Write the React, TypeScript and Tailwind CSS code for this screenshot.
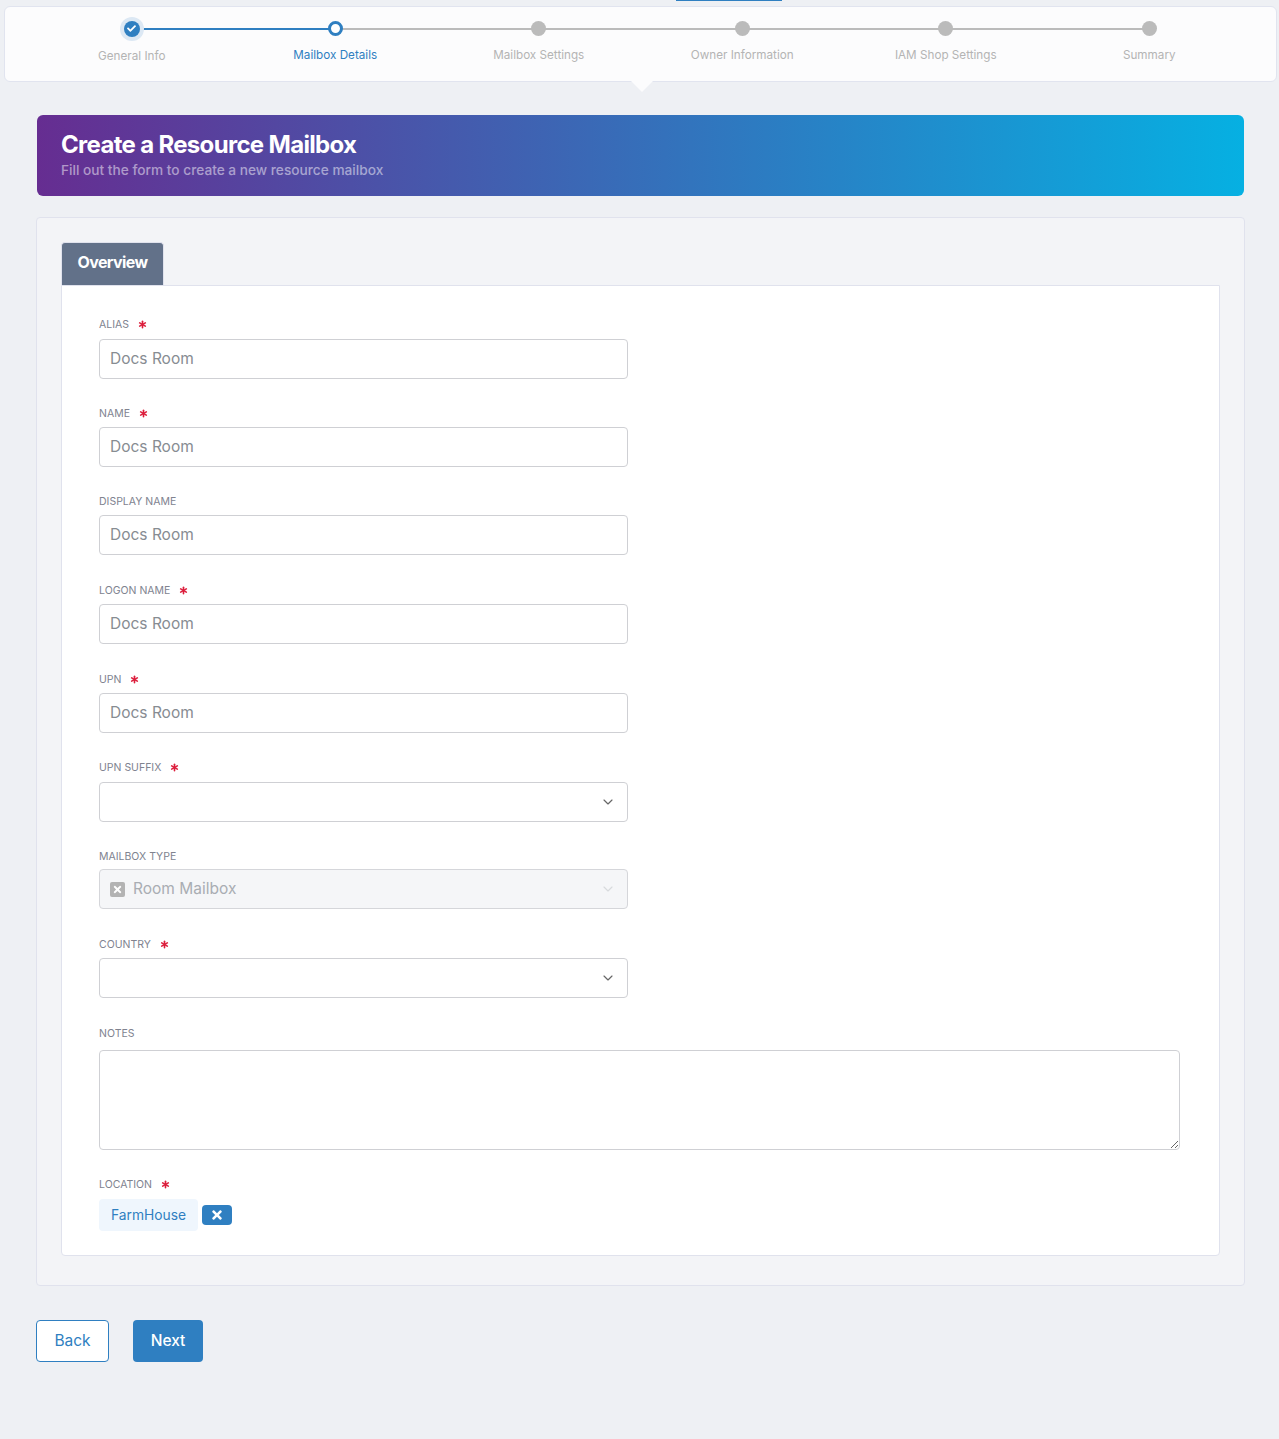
import { Asterisk, ChevronDown } from 'lucide-react'
import { FaCheck, FaTimes } from 'react-icons/fa'

const steps = ['General Info', 'Mailbox Details', 'Mailbox Settings', 'Owner Information', 'IAM Shop Settings', 'Summary']

function Stepper() {
  return (
    <div className="relative ml-1 mr-[2px] mt-[5px] h-[76px] rounded-md border border-[#e1e4ef] bg-[#fcfcfd]">
      <div className="ml-[25px] grid w-[1221px] grid-cols-6">
        {steps.map((step, index) => (
          <div key={step} className="relative flex flex-col items-center">
            {index < steps.length - 1 ? (
              <div className={`absolute left-1/2 top-[21px] h-[2px] w-full ${index === 0 ? 'bg-[#2f7fc1]' : 'bg-[#bbbbbb]'}`} />
            ) : null}
            <div className="relative flex h-[43px] w-6 items-center justify-center">
              {index === 0 ? (
                <div className="flex h-6 w-6 items-center justify-center rounded-full bg-[#dce8f4]">
                  <div className="flex h-4 w-4 items-center justify-center rounded-full bg-[#2f7fc1] text-white">
                    <FaCheck size={9} />
                  </div>
                </div>
              ) : index === 1 ? (
                <div className="h-[15px] w-[15px] rounded-full border-[3px] border-[#2f7fc1] bg-white" />
              ) : (
                <div className="h-[15px] w-[15px] rounded-full bg-[#bbbbbb]" />
              )}
            </div>
            <div className={`text-[11.7px] leading-[16px] ${index === 1 ? 'text-[#2f7fc1]' : 'text-[#b4b4b4]'} ${index === 0 ? '-mt-[2px]' : '-mt-[3px]'}`}>
              {step}
            </div>
          </div>
        ))}
      </div>
      <div className="absolute left-[626px] top-[74px] h-0 w-0 border-x-[11px] border-t-[11px] border-x-transparent border-t-[#fcfcfd]" />
    </div>
  )
}

function FieldLabel({ text, required, className = 'mb-2' }: { text: string; required?: boolean; className?: string }) {
  return (
    <div className={`flex h-[14px] items-center text-[10.5px] leading-[14px] text-[#80838f] ${className}`}>
      <span className="mt-[2px]">{text}</span>
      {required ? <Asterisk size={13} strokeWidth={3} className="ml-[7px] text-[#dc1e3c]" /> : null}
    </div>
  )
}

function TextField({ label, required, className, labelClass }: { label: string; required?: boolean; className: string; labelClass?: string }) {
  return (
    <div className={`w-[529px] ${className}`}>
      <FieldLabel text={label} required={required} className={labelClass} />
      <input
        readOnly
        value="Docs Room"
        className="h-10 w-full rounded border border-[#cfd0d4] bg-white px-[10px] pb-px text-[15.5px] text-[#878c92] outline-none"
      />
    </div>
  )
}

function SelectField({ label, required, className, labelClass }: { label: string; required?: boolean; className: string; labelClass?: string }) {
  return (
    <div className={`w-[529px] ${className}`}>
      <FieldLabel text={label} required={required} className={labelClass} />
      <div className="flex h-10 items-center justify-end rounded border border-[#cfd0d4] bg-white pr-[11px]">
        <ChevronDown size={16} strokeWidth={1.75} className="text-[#666666]" />
      </div>
    </div>
  )
}

export default function App() {
  return (
    <div className="min-h-screen bg-[#eef0f4] font-['Inter','Liberation_Sans',sans-serif]">
      <div className="ml-[676px] h-px w-[106px] bg-[#2f7fc1]" />
      <Stepper />

      <div className="ml-[37px] mt-[33px] flex h-[81px] w-[1207px] flex-col justify-center rounded-md bg-linear-to-r/srgb from-[#662d91] to-[#06b0e2] px-6 pb-[2px]">
        <h1 className="text-[24px] font-bold leading-[30px] tracking-[-0.68px] text-white">Create a Resource Mailbox</h1>
        <p className="mt-px text-[13.7px] font-medium leading-[18px] text-white/50">Fill out the form to create a new resource mailbox</p>
      </div>

      <div className="ml-9 mt-[21px] w-[1209px] rounded border border-[#e0e2ed] bg-[#f3f4f7] px-6 pb-[29px] pt-6">
        <div className="flex h-[43px] w-[103px] items-center justify-center rounded-t border border-b-0 border-[#e0e2ed] bg-[#627189] pb-[4px] text-[16px] font-bold tracking-[-0.6px] text-white">
          Overview
        </div>
        <div className="rounded-b border border-[#e0e2ed] bg-white pb-6 pl-[37px] pr-[39px] pt-[31px]">
          <TextField label="ALIAS" required className="mb-[27px]" />
          <TextField label="NAME" required labelClass="mb-[7px]" className="mb-[27px]" />
          <TextField label="DISPLAY NAME" labelClass="mb-[7px]" className="mb-[28px]" />
          <TextField label="LOGON NAME" required labelClass="mb-[7px]" className="mb-[28px]" />
          <TextField label="UPN" required labelClass="mb-[7px]" className="mb-[27px]" />
          <SelectField label="UPN SUFFIX" required className="mb-[27px]" />

          <div className="mb-[28px] w-[529px]">
            <FieldLabel text="MAILBOX TYPE" className="mb-[6px]" />
            <div className="flex h-10 items-center rounded border border-[#d5d6da] bg-[#f5f6f8] pl-[10px] pr-[11px]">
              <div className="mr-2 flex h-[15px] w-[15px] items-center justify-center rounded-[2px] bg-[#b3b3b3] text-white">
                <FaTimes size={11} />
              </div>
              <span className="flex-1 text-[15.5px] text-[#a9adb3]">Room Mailbox</span>
              <ChevronDown size={16} strokeWidth={1.75} className="text-[#d8dadd]" />
            </div>
          </div>

          <SelectField label="COUNTRY" required labelClass="mb-[7px]" className="mb-[28px]" />

          <div className="mb-[27px]">
            <FieldLabel text="NOTES" className="mb-[10px]" />
            <textarea className="block h-[100px] w-full rounded border border-[#cfd0d4] bg-white outline-none" />
          </div>

          <FieldLabel text="LOCATION" required />
          <div className="flex items-center gap-1">
            <span className="flex h-8 w-[99px] items-center justify-center rounded bg-[#eff6fd] text-[13.8px] text-[#2f7fc1]">FarmHouse</span>
            <button type="button" className="flex h-5 w-[30px] items-center justify-center rounded bg-[#2f7fc1] text-white">
              <FaTimes size={14} />
            </button>
          </div>
        </div>
      </div>

      <div className="ml-9 mt-[34px] flex gap-6">
        <button type="button" className="h-[42px] w-[73px] rounded border border-[#2f7fc1] bg-white text-[15.5px] text-[#2f7fc1]">Back</button>
        <button type="button" className="h-[42px] w-[70px] rounded bg-[#2f7fc1] text-[15.5px] font-medium text-white">Next</button>
      </div>
    </div>
  )
}
